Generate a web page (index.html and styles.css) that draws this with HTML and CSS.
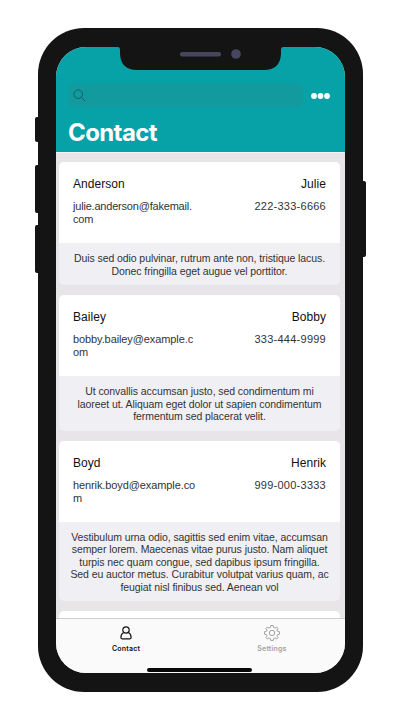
FILE: index.html
```html
<!DOCTYPE html>
<html lang="en">
<head>
<meta charset="utf-8">
<title>Contact</title>
<link rel="stylesheet" href="styles.css">
</head>
<body>
<div class="phone">
  <i class="key mute"></i><i class="key up"></i><i class="key down"></i><i class="key power"></i>
  <div class="screen">
    <header class="header">
      <div class="toolbar">
        <div class="search">
          <svg width="13" height="13" viewBox="0 0 13 13"><circle cx="5.2" cy="5.2" r="4.3"/><path d="M8.3 8.3L12 12"/></svg>
        </div>
        <svg class="more" width="19" height="6" viewBox="0 0 19 6"><circle cx="3" cy="3" r="2.9"/><circle cx="9.5" cy="3" r="2.9"/><circle cx="16" cy="3" r="2.9"/></svg>
      </div>
      <h1>Contact</h1>
    </header>
    <main class="list">
      <article class="card">
        <div class="info">
          <div class="row name"><span>Anderson</span><span>Julie</span></div>
          <div class="row detail"><span class="tight">julie.anderson@fakemail.<br>com</span><span class="tel">222-333-6666</span></div>
        </div>
        <p class="note">Duis sed odio pulvinar, rutrum ante non, tristique lacus.<br>Donec fringilla eget augue vel porttitor.</p>
      </article>
      <article class="card">
        <div class="info">
          <div class="row name"><span>Bailey</span><span>Bobby</span></div>
          <div class="row detail"><span>bobby.bailey@example.c<br>om</span><span class="tel">333-444-9999</span></div>
        </div>
        <p class="note">Ut convallis accumsan justo, sed condimentum mi<br>laoreet ut. Aliquam eget dolor ut sapien condimentum<br>fermentum sed placerat velit.</p>
      </article>
      <article class="card">
        <div class="info">
          <div class="row name"><span>Boyd</span><span>Henrik</span></div>
          <div class="row detail"><span>henrik.boyd@example.co<br>m</span><span class="tel">999-000-3333</span></div>
        </div>
        <p class="note">Vestibulum urna odio, sagittis sed enim vitae, accumsan<br>semper lorem. Maecenas vitae purus justo. Nam aliquet<br>turpis nec quam congue, sed dapibus ipsum fringilla.<br>Sed eu auctor metus. Curabitur volutpat varius quam, ac<br>feugiat nisl finibus sed. Aenean vol</p>
      </article>
      <article class="card"><div class="info"></div></article>
    </main>
    <nav class="tabs">
      <div class="tab active">
        <svg width="16" height="16" viewBox="0 0 16 16"><circle cx="8" cy="5" r="3.2"/><path d="M5.6 7.4C3.800 8.400 2.900 10.200 2.900 12.400Q2.900 13.900 4.400 13.900H11.600Q13.100 13.900 13.100 12.400C13.100 10.200 12.200 8.400 10.400 7.400"/></svg>
        <span>Contact</span>
      </div>
      <div class="tab">
        <svg width="16" height="16" viewBox="0 0 16 16"><path d="M6.7 .6H9.3L9.7 2.5L11 3.1L12.7 2L14 3.3L13 5L13.5 6.3L15.4 6.7V9.3L13.5 9.7L13 11L14 12.7L12.7 14L11 12.9L9.7 13.5L9.3 15.4H6.7L6.3 13.5L5 12.9L3.3 14L2 12.7L3 11L2.5 9.7L.6 9.3V6.7L2.5 6.3L3 5L2 3.3L3.3 2L5 3.1L6.3 2.5Z"/><circle cx="8" cy="8" r="2.7"/></svg>
        <span>Settings</span>
      </div>
      <i class="home"></i>
    </nav>
  </div>
  <svg class="notch" width="165" height="24" viewBox="0 0 165 24"><path d="M0 0H165V0Q163 0 163 2.500V7Q162 23 146 23H19Q3 23 2 7V2.500Q2 0 0 0Z" fill="#141414"/><rect x="62" y="5" width="41" height="4.500" rx="2.250" fill="#464660"/><circle cx="118" cy="7" r="4.800" fill="#464660"/></svg>
</div>
</body>
</html>
```
FILE: styles.css
```css
* { box-sizing: border-box; }
body {
  margin: 0;
  width: 400px;
  height: 720px;
  padding: 28px 37.5px 0 38px;
  overflow: hidden;
  background: #fff;
  font-family: "Liberation Sans", Arial, sans-serif;
  color: #111;
}
.phone {
  position: relative;
  height: 664px;
  padding: 19px 17.5px 19px 18px;
  border-radius: 46px;
  background: #141414;
}
.key {
  position: absolute;
  width: 5px;
  left: -3px;
  border-radius: 2px 0 0 2px;
  background: #141414;
}
.mute { top: 89px; height: 25px; }
.up { top: 137px; height: 48px; }
.down { top: 197px; height: 48px; }
.power { top: 153px; height: 76px; left: auto; right: -3px; border-radius: 0 2px 2px 0; }
.notch { position: absolute; left: 80px; top: 19px; }
.screen {
  width: 289px;
  height: 626px;
  display: flex;
  flex-direction: column;
  overflow: hidden;
  border-radius: 30px;
  background: #e7e5e8;
}
.header {
  flex: none;
  height: 105px;
  padding: 36px 15px 0 12px;
  background: #07a2a7;
}
.toolbar { display: flex; align-items: center; justify-content: space-between; }
.search {
  display: flex;
  align-items: center;
  width: 235px;
  height: 25px;
  padding-left: 5px;
  border-radius: 7px;
  background: #129b9f;
}
.search svg { fill: none; stroke: #146064; stroke-width: 1; }
.more { fill: #fff; }
h1 {
  margin: 11px 0 0;
  font: 700 24px/28px Inter, "Liberation Sans", sans-serif;
  letter-spacing: -.6px;
  color: #fff;
}
.list {
  flex: 1;
  min-height: 0;
  display: flex;
  flex-direction: column;
  gap: 10px;
  padding: 9px 5px 0 3px;
  border-top: 1px solid #f3f1f2;
  overflow: hidden;
}
.card { flex: none; overflow: hidden; border-radius: 5px; background: #f0eff4; }
.info { height: 81px; padding: 14px 14px 0; background: #fff; }
.row { display: flex; justify-content: space-between; }
.name { font-size: 12px; line-height: 16px; letter-spacing: .05px; }
.detail {
  margin-top: 8px;
  font-size: 11px;
  line-height: 13px;
  letter-spacing: -.1px;
  color: #333;
}
.tight { letter-spacing: -.2px; }
.tel { letter-spacing: .25px; }
.note {
  margin: 0;
  padding: 9px 0 8px;
  font-size: 10.5px;
  line-height: 12.500px;
  letter-spacing: -.08px;
  text-align: center;
  white-space: nowrap;
  color: #333;
}
.tabs {
  flex: none;
  position: relative;
  display: flex;
  height: 55px;
  padding: 6px 0 0;
  border-top: 1px solid #cfcdd0;
  background: #fbfafb;
}
.tab {
  flex: 1;
  display: flex;
  flex-direction: column;
  align-items: center;
  font: 600 7px/9px Inter, "Liberation Sans", sans-serif;
  letter-spacing: .2px;
  color: #a2a2a2;
}
.tab:first-child { flex: 0 0 140px; }
.tab:nth-child(2) { flex: 0 0 152px; }
.tab svg { margin-bottom: 3px; fill: none; stroke: #999; stroke-width: .9; }
.active { color: #111; }
.active svg { stroke: #111; stroke-width: 1.200; }
.home {
  position: absolute;
  left: 91px;
  bottom: 1px;
  width: 105px;
  height: 4px;
  border-radius: 2px;
  background: #080808;
}
```
